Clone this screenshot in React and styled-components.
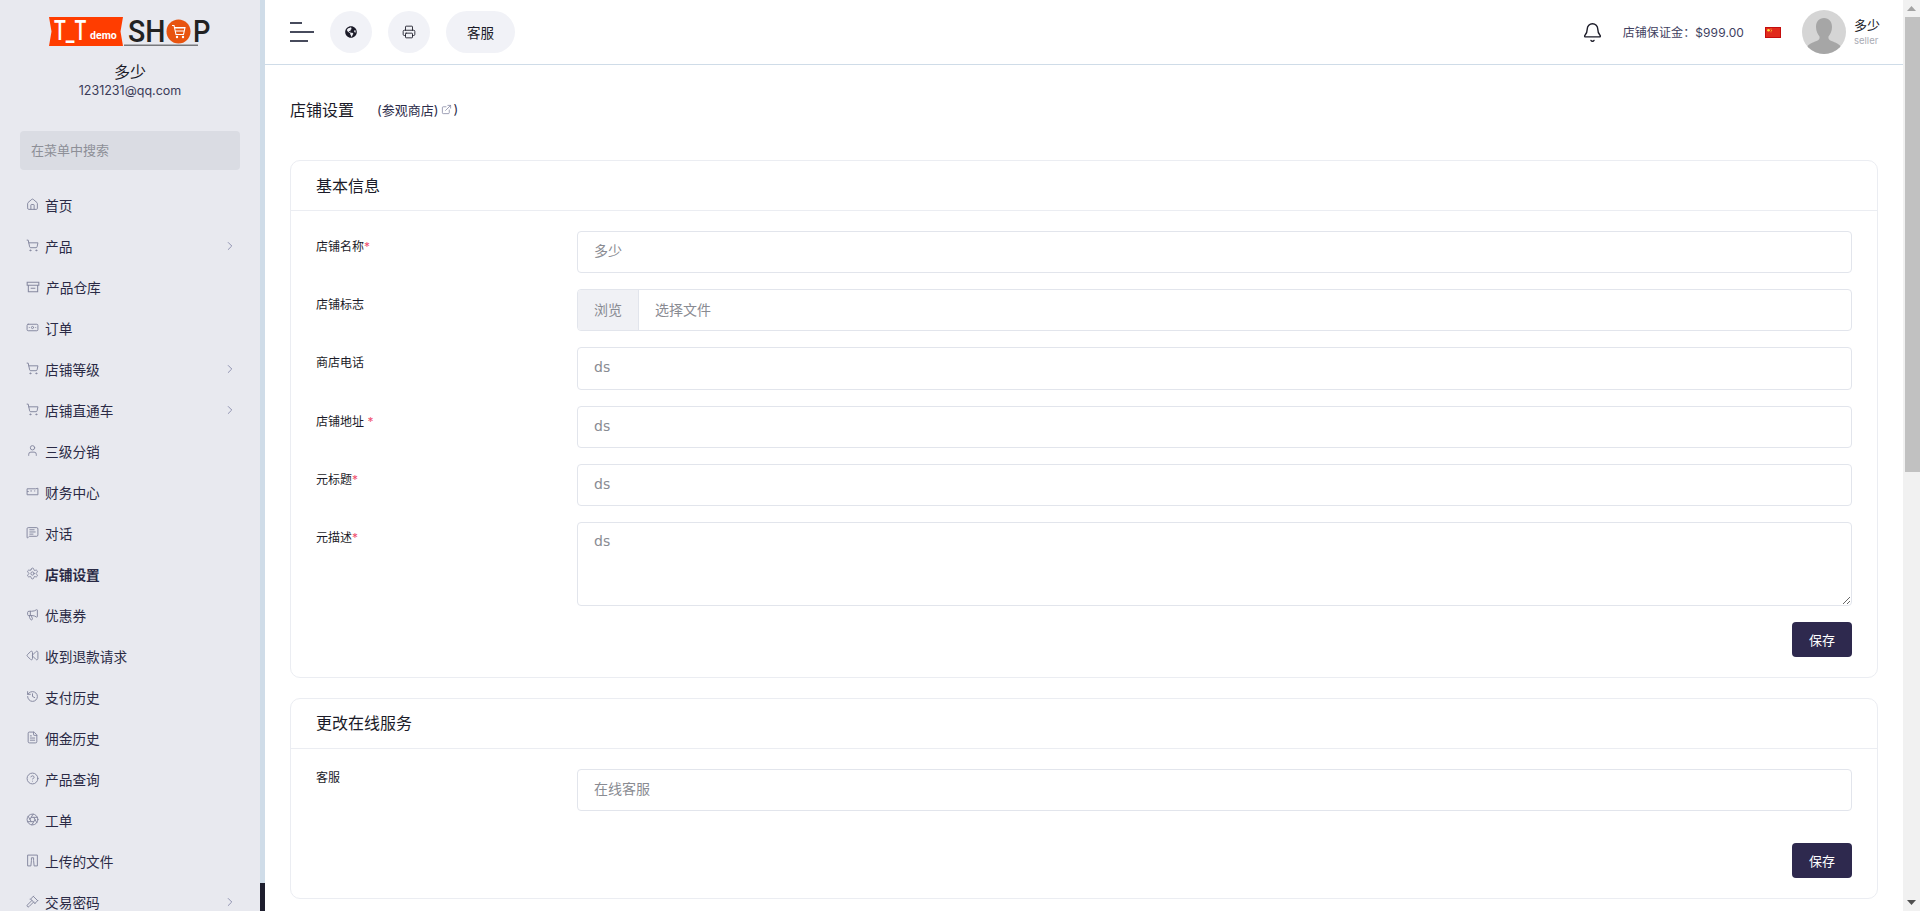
import React from 'react';
import styled, { createGlobalStyle } from 'styled-components';
import {
  Home, ShoppingCart, Banknote, User, MessageSquareText, Settings, Megaphone, Rewind,
  History, FileText, CircleHelp, Aperture, Gavel, ChevronRight, Printer, Bell, ExternalLink,
} from 'lucide-react';
import { FaGlobeAmericas } from 'react-icons/fa';

const latin = `"Inter", "Noto Sans CJK SC", sans-serif`;
const fieldFont = `"DejaVu Sans", "Noto Sans CJK SC", sans-serif`;

const GlobalStyle = createGlobalStyle`
  html, body { margin: 0; padding: 0; height: 100%; overflow: hidden; }
  body { font-family: ${latin}; color: #1b1b28; background: #fff; }
  * { box-sizing: border-box; }
`;

const Shell = styled.div`
  display: flex;
  height: 100vh;
  overflow: hidden;
`;

const Sidebar = styled.aside`
  width: 260px;
  flex: none;
  background: #e8e9ef;
  overflow: hidden;
`;

const Rail = styled.div`
  width: 5px;
  flex: none;
  background: #cfdce8;
  display: flex;
  flex-direction: column;
  justify-content: flex-end;
`;

const RailThumb = styled.div`
  height: 28px;
  background: #1e1e2e;
`;

const LogoWrap = styled.div`
  display: flex;
  justify-content: center;
  padding-top: 10px;
  height: 62px;
`;

const SellerName = styled.div`
  text-align: center;
  font-size: 16px;
  line-height: 20px;
  color: #1b1b28;
`;

const SellerMail = styled.div`
  text-align: center;
  font-size: 12.5px;
  line-height: 18px;
  color: #3b3b58;
`;

const SearchBox = styled.input`
  display: block;
  width: 220px;
  height: 39px;
  margin: 31px 20px 14px;
  padding: 0 11px 2px;
  border: 0;
  border-radius: 4px;
  background: #dadce3;
  font-family: ${latin};
  font-size: 13px;
  outline: none;
  &::placeholder { color: #8d8f97; opacity: 1; }
`;

const Menu = styled.nav`
  display: flex;
  flex-direction: column;
`;

const MenuRow = styled.a`
  display: flex;
  align-items: center;
  height: 41px;
  flex: none;
  padding: 0 23px 0 26px;
  gap: 6px;
  font-size: 13.7px;
  font-weight: ${(p) => (p.$active ? 700 : 400)};
  color: #2a2a45;
  svg { flex: none; color: #85889f; }
`;

const MenuLabel = styled.span`
  flex: 1;
`;

const Arrow = styled(ChevronRight)`
  && { color: #71749a; }
`;

const Main = styled.main`
  flex: 1;
  min-width: 0;
  height: 100vh;
  overflow: hidden;
`;

const ScrollTrack = styled.div`
  width: 17px;
  flex: none;
  display: flex;
  flex-direction: column;
  background: #f1f1f1;
`;

const ScrollArrow = styled.svg`
  display: block;
  width: 17px;
  height: 17px;
  flex: none;
`;

const ScrollThumb = styled.div`
  width: 15px;
  height: 455px;
  margin-left: 2px;
  background: #c1c1c1;
`;

const ScrollRest = styled.div`
  flex: 1;
`;

const Topbar = styled.header`
  display: flex;
  align-items: center;
  height: 65px;
  padding: 0 25px;
  border-bottom: 1px solid #cfdce8;
`;

const Burger = styled.div`
  display: flex;
  flex-direction: column;
  gap: 7px;
  width: 24px;
  margin-right: 16px;
`;

const BurgerLine = styled.span`
  display: block;
  height: 2px;
  width: ${(p) => p.$w}px;
  background: #474b5c;
`;

const RoundButton = styled.button`
  display: flex;
  align-items: center;
  justify-content: center;
  width: ${(p) => (p.$wide ? '69px' : '42px')};
  height: 42px;
  margin-right: 16px;
  padding: 0;
  border: 0;
  border-radius: 21px;
  background: #f1f2f7;
  color: #1b1b28;
  font-family: ${latin};
  font-size: 13.5px;
`;

const TopRight = styled.div`
  margin-left: auto;
  display: flex;
  align-items: center;
  margin-right: -2px;
`;

const Deposit = styled.span`
  font-size: 12px;
  color: #3f3f5f;
  margin: 0 21px 2px 20px;
  letter-spacing: 0.1px;
`;

const Avatar = styled.svg`
  display: block;
  width: 44px;
  height: 44px;
  border-radius: 50%;
  margin: 0 8px 0 21px;
`;

const UserName = styled.div`
  font-size: 13px;
  line-height: 17px;
  color: #1b1b28;
`;

const UserRole = styled.div`
  font-size: 9.5px;
  line-height: 14px;
  color: #a9abb4;
`;

const Content = styled.div`
  padding: 32px 25px 0;
`;

const PageTitle = styled.div`
  display: flex;
  align-items: center;
  height: 24px;
  margin-bottom: 39px;
`;

const TitleText = styled.h1`
  margin: 0 23px 0 0;
  font-size: 16px;
  font-weight: 400;
  color: #1b1b28;
`;

const ShopLink = styled.a`
  display: flex;
  align-items: center;
  gap: 2px;
  font-size: 13px;
  color: #2c2c4a;
  svg { color: #7b7e9c; }
`;

const Card = styled.section`
  border: 1px solid #ebedf2;
  border-radius: 10px;
  margin-bottom: 20px;
`;

const CardHeader = styled.h2`
  display: flex;
  align-items: center;
  height: 50px;
  margin: 0;
  padding: 0 25px 2px;
  border-bottom: 1px solid #ebedf2;
  font-size: 16px;
  font-weight: 400;
  color: #1b1b28;
`;

const CardBody = styled.div`
  padding: 20px 25px 20px;
`;

const FormRow = styled.div`
  display: grid;
  grid-template-columns: 261px 1fr;
  margin-bottom: ${(p) => (p.$last ? 0 : 16)}px;
`;

const Label = styled.label`
  font-size: 12px;
  line-height: 18px;
  padding-top: ${(p) => (p.$flush ? 0 : 7)}px;
  color: #1b1b28;
`;

const Required = styled.span`
  color: #f0506e;
`;

const fieldCss = `
  display: block;
  width: 100%;
  border: 1px solid #e2e5ec;
  border-radius: 4px;
  background: #fff;
  padding: 0 16px;
  font-size: 14px;
  outline: none;
  &::placeholder { color: #898b92; opacity: 1; }
`;

const Field = styled.input`
  ${fieldCss}
  font-family: ${fieldFont};
  height: 42.2px;
  padding-bottom: 2px;
`;

const Area = styled.textarea`
  ${fieldCss}
  font-family: ${fieldFont};
  height: 84px;
  padding-top: 10px;
`;

const FileField = styled.div`
  display: flex;
  align-items: center;
  height: 42.2px;
  border: 1px solid #e2e5ec;
  border-radius: 4px;
  overflow: hidden;
  font-size: 14px;
  color: #898b92;
`;

const Browse = styled.span`
  display: flex;
  align-items: center;
  justify-content: center;
  width: 61px;
  height: 100%;
  padding-bottom: 2px;
  background: #f0f1f5;
  border-right: 1px solid #e2e5ec;
`;

const FileHint = styled.span`
  padding: 0 0 2px 16px;
`;

const Actions = styled.div`
  display: flex;
  justify-content: flex-end;
  padding-top: ${(p) => p.$top}px;
`;

const SaveButton = styled.button`
  width: 60px;
  height: 35px;
  border: 0;
  border-radius: 4px;
  background: #2e294e;
  color: #fff;
  font-family: ${latin};
  font-size: 13px;
`;

const Logo = () => (
  <svg width="164" height="44" viewBox="47 10 164 44">
    <polygon points="48,17 122,17 119.5,31.5 122,46 48,46 50.5,31.5" fill="#ff3d00" />
    <text transform="translate(53 40) scale(.72 1)" fontFamily="Roboto, sans-serif" fontWeight="500" fontSize="27" fill="#fff">T_T</text>
    <text transform="translate(89 39) scale(.96 1)" fontFamily="Roboto, sans-serif" fontWeight="700" fontSize="11" fill="#fff">demo</text>
    <text transform="translate(127 42) scale(.92 1)" fontFamily="Roboto, sans-serif" fontWeight="500" fontSize="31" fill="#222">SH</text>
    <circle cx="177.5" cy="31.5" r="12" fill="#e8540f" />
    <path d="M171 25.5h2l2 9h7.5l1.5-7h-10.500M174 28h10M174.600 31h9" fill="none" stroke="#fff" strokeWidth="1.1" />
    <circle cx="176" cy="37" r="1.2" fill="#fff" />
    <circle cx="182" cy="37" r="1.2" fill="#fff" />
    <text transform="translate(192 42) scale(.88 1)" fontFamily="Roboto, sans-serif" fontWeight="500" fontSize="31" fill="#222">P</text>
    <rect x="123" y="44.500" width="74" height="1.500" fill="#77787c" />
  </svg>
);

const line = { width: 13, height: 13, viewBox: '0 0 24 24', fill: 'none', stroke: 'currentColor', strokeWidth: 1.8 };

const WarehouseIcon = () => (
  <svg {...line} width="14" height="14"><path d="M2 4h20v5H2zM4 9v11h16V9M8 14h8" /></svg>
);
const FinanceIcon = () => (
  <svg {...line}><path d="M2 7h16l4-1v12H2zM2 12h3M8 11h3M15 11h2" /></svg>
);
const UploadIcon = () => (
  <svg {...line}><path d="M3 2h18v20h-6l-1-10V7h-4v5L9 22H3z" /></svg>
);

const icons = { size: 13, strokeWidth: 1.8 };

const menu = [
  { label: '首页', icon: <Home {...icons} /> },
  { label: '产品', icon: <ShoppingCart {...icons} />, more: true },
  { label: '产品仓库', icon: <WarehouseIcon /> },
  { label: '订单', icon: <Banknote {...icons} /> },
  { label: '店铺等级', icon: <ShoppingCart {...icons} />, more: true },
  { label: '店铺直通车', icon: <ShoppingCart {...icons} />, more: true },
  { label: '三级分销', icon: <User {...icons} /> },
  { label: '财务中心', icon: <FinanceIcon /> },
  { label: '对话', icon: <MessageSquareText {...icons} /> },
  { label: '店铺设置', icon: <Settings {...icons} />, active: true },
  { label: '优惠券', icon: <Megaphone {...icons} /> },
  { label: '收到退款请求', icon: <Rewind {...icons} /> },
  { label: '支付历史', icon: <History {...icons} /> },
  { label: '佣金历史', icon: <FileText {...icons} /> },
  { label: '产品查询', icon: <CircleHelp {...icons} /> },
  { label: '工单', icon: <Aperture {...icons} /> },
  { label: '上传的文件', icon: <UploadIcon /> },
  { label: '交易密码', icon: <Gavel {...icons} />, more: true },
];

const FlagSvg = styled.svg`
  display: block;
`;

const Flag = () => (
  <FlagSvg width="16" height="11" viewBox="0 0 16 11">
    <rect width="16" height="11" fill="#c40d0d" />
    <rect x="1" y="1" width="14" height="9" fill="#e12a1c" />
    <circle cx="3.500" cy="3.200" r="1.300" fill="#ffd83c" />
    <circle cx="6" cy="2" r=".5" fill="#ffd83c" />
    <circle cx="6.600" cy="3.400" r=".5" fill="#ffd83c" />
    <circle cx="6" cy="4.800" r=".5" fill="#ffd83c" />
  </FlagSvg>
);

const FormField = ({ label, required, placeholder }) => (
  <FormRow>
    <Label>{label}{required && <Required>*</Required>}</Label>
    <Field placeholder={placeholder} />
  </FormRow>
);

export default function App() {
  return (
    <Shell>
      <GlobalStyle />
      <Sidebar>
        <LogoWrap><Logo /></LogoWrap>
        <SellerName>多少</SellerName>
        <SellerMail>1231231@qq.com</SellerMail>
        <SearchBox placeholder="在菜单中搜索" />
        <Menu>
          {menu.map((item) => (
            <MenuRow key={item.label} $active={item.active}>
              {item.icon}
              <MenuLabel>{item.label}</MenuLabel>
              {item.more && <Arrow size={14} strokeWidth={1.25} />}
            </MenuRow>
          ))}
        </Menu>
      </Sidebar>
      <Rail><RailThumb /></Rail>
      <Main>
        <Topbar>
          <Burger>
            <BurgerLine $w={12} />
            <BurgerLine $w={24} />
            <BurgerLine $w={18} />
          </Burger>
          <RoundButton><FaGlobeAmericas size={12} /></RoundButton>
          <RoundButton><Printer size={14} strokeWidth={1.5} /></RoundButton>
          <RoundButton $wide>客服</RoundButton>
          <TopRight>
            <Bell size={21} strokeWidth={1.6} />
            <Deposit>店铺保证金：$999.00</Deposit>
            <Flag />
            <Avatar viewBox="0 0 44 44">
              <rect width="44" height="44" fill="#d5d5d5" />
              <path d="M22 8c5 0 8 3.500 8 9 0 4-1.500 7-3.500 9.500-.5 2 .5 3.500 3 4.500 4 1.500 8 3 9.500 6v7H5v-7c1.500-3 5.500-4.500 9.500-6 2.500-1 3.500-2.500 3-4.500C15.500 24 14 21 14 17c0-5.500 3-9 8-9z" fill="#a6a6a6" />
            </Avatar>
            <div>
              <UserName>多少</UserName>
              <UserRole>seller</UserRole>
            </div>
          </TopRight>
        </Topbar>
        <Content>
          <PageTitle>
            <TitleText>店铺设置</TitleText>
            <ShopLink>(参观商店)<ExternalLink size={11} strokeWidth={1.6} />)</ShopLink>
          </PageTitle>
          <Card>
            <CardHeader>基本信息</CardHeader>
            <CardBody>
              <FormField label="店铺名称" required placeholder="多少" />
              <FormRow>
                <Label>店铺标志</Label>
                <FileField>
                  <Browse>浏览</Browse>
                  <FileHint>选择文件</FileHint>
                </FileField>
              </FormRow>
              <FormField label="商店电话" placeholder="ds" />
              <FormField label="店铺地址 " required placeholder="ds" />
              <FormField label="元标题" required placeholder="ds" />
              <FormRow $last>
                <Label>元描述<Required>*</Required></Label>
                <Area placeholder="ds" />
              </FormRow>
              <Actions $top={16}><SaveButton>保存</SaveButton></Actions>
            </CardBody>
          </Card>
          <Card>
            <CardHeader>更改在线服务</CardHeader>
            <CardBody>
              <FormRow $last>
                <Label $flush>客服</Label>
                <Field placeholder="在线客服" />
              </FormRow>
              <Actions $top={32}><SaveButton>保存</SaveButton></Actions>
            </CardBody>
          </Card>
        </Content>
      </Main>
      <ScrollTrack>
        <ScrollArrow viewBox="0 0 17 17"><path d="M4 11h9L8.500 6z" fill="#a3a3a3" /></ScrollArrow>
        <ScrollThumb />
        <ScrollRest />
        <ScrollArrow viewBox="0 0 17 17"><path d="M4 6h9L8.500 11z" fill="#505050" /></ScrollArrow>
      </ScrollTrack>
    </Shell>
  );
}
